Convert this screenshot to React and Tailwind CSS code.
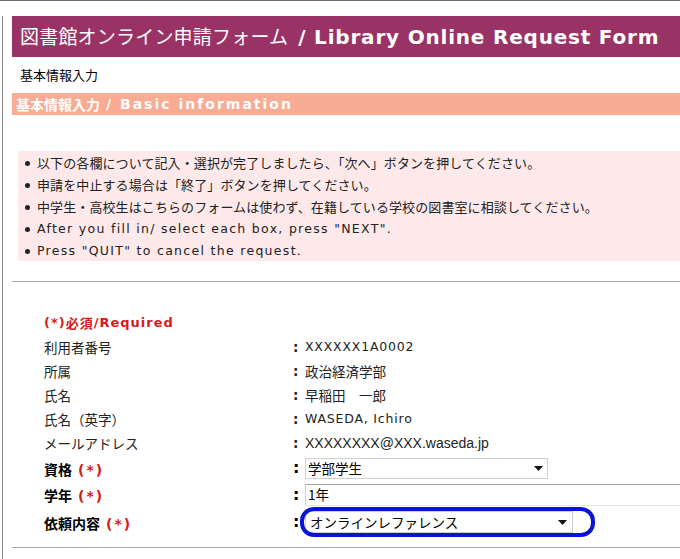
import React from 'react';

const jp = { fontFamily: '"MS PGothic", "Noto Sans CJK JP", "DejaVu Sans", sans-serif' };
const vd = { fontFamily: '"DejaVu Sans", "Noto Sans CJK JP", sans-serif' };

const notes = [
  '以下の各欄について記入・選択が完了しましたら、「次へ」ボタンを押してください。',
  '申請を中止する場合は「終了」ボタンを押してください。',
  '中学生・高校生はこちらのフォームは使わず、在籍している学校の図書室に相談してください。',
  'After you fill in/ select each box, press "NEXT".',
  'Press "QUIT" to cancel the request.',
];

const info = [
  ['利用者番号', 'XXXXXX1A0002', true],
  ['所属', '政治経済学部'],
  ['氏名', '早稲田　一郎'],
  ['氏名（英字）', 'WASEDA, Ichiro', true],
  ['メールアドレス', 'XXXXXXXX@XXX.waseda.jp', 'arial'],
];

function Arrow() {
  return (
    <svg width="9" height="5" viewBox="0 0 9 5" className="shrink-0">
      <path d="M0 0 H9 L4.5 5 Z" fill="#111" />
    </svg>
  );
}

function Required({ label }) {
  return (
    <span className="font-bold text-[14px] text-black" style={jp}>
      {label}
      <span className="text-[#d61a1a] ml-[6px] tracking-[2px]" style={vd}>(*)</span>
    </span>
  );
}

export default function App() {
  return (
    <div className="w-[680px] h-[559px] overflow-hidden bg-white border-t border-[#6f6f6f]" style={jp}>
      <div className="ml-[2px] h-full border-l border-[#8a8a8a] pl-[9px]">
        <div className="mt-[15px] h-[41px] bg-[#993366] flex items-center pl-[8px] text-white whitespace-nowrap">
          <span className="text-[19px] tracking-[0.2px]">図書館オンライン申請フォーム</span>
          <span className="font-bold text-[20px] ml-[10px] tracking-[0.8px]" style={vd}>/ Library Online Request Form</span>
        </div>

        <div className="h-[36px] flex items-center pl-[8px] text-[13px] text-black">基本情報入力</div>

        <div className="h-[22px] bg-[#f9ab94] flex items-center pl-[4px] text-white text-[14px] font-bold whitespace-nowrap">
          <span>基本情報入力</span>
          <span className="ml-[6px] tracking-[2px]" style={vd}>/ Basic information</span>
        </div>

        <div className="ml-[6px] mt-[36px] h-[110px] bg-[#fde9e9] pt-[1px] pl-[7px]">
          {notes.map((n, i) => (
            <div key={i} className="h-[22px] flex items-center text-[13px] text-[#222] whitespace-nowrap">
              <span className="w-[5px] h-[5px] rounded-full bg-[#222] mr-[7px] shrink-0" />
              <span style={i > 2 ? vd : jp} className={i > 2 ? 'text-[12.5px] tracking-[1.3px]' : 'tracking-[0.1px]'}>{n}</span>
            </div>
          ))}
        </div>

        <div className="mt-[20px] border-t border-[#a9a9a9]" />

        <div className="pl-[32px] pt-[29px]">
          <div className="h-[24px] flex items-center text-[#d61a1a] font-bold text-[13px] tracking-[1px]" style={vd}>
            (*)<span style={jp}>必須</span>/Required
          </div>
          {info.map(([k, v, latin]) => (
            <div key={k} className="h-[24px] flex items-center text-[13.5px] text-[#222]">
              <span className="w-[249px]">{k}</span>
              <span className="w-[12px] font-bold" style={vd}>:</span>
              <span
                style={latin === 'arial' ? { fontFamily: '"Liberation Sans", sans-serif' } : latin ? vd : jp}
                className={latin === true ? 'text-[12.5px] tracking-[0.8px]' : latin === 'arial' ? 'text-[14px]' : ''}
              >
                {v}
              </span>
            </div>
          ))}

          <div className="h-[26px] flex items-center">
            <span className="w-[249px]"><Required label="資格" /></span>
            <span className="w-[12px] font-bold" style={vd}>:</span>
            <div className="w-[243px] h-[21px] border border-[#cfcfcf] bg-white flex items-center justify-between pl-[2px] pr-[4px] text-[13.5px]">
              <span>学部学生</span>
              <Arrow />
            </div>
          </div>

          <div className="h-[27px] flex items-center">
            <span className="w-[249px]"><Required label="学年" /></span>
            <span className="w-[12px] font-bold" style={vd}>:</span>
            <div className="flex-1 h-[22px] border-t border-[#a0a0a0] border-l border-l-[#cfcfcf] border-b border-b-[#e4e4e4] bg-white flex items-center pl-[2px] text-[13.5px]">
              1年
            </div>
          </div>

          <div className="h-[28px] flex items-center">
            <span className="w-[249px]"><Required label="依頼内容" /></span>
            <span className="w-[12px] font-bold" style={vd}>:</span>
            <div className="relative">
              <div className="w-[268px] h-[22px] border border-[#cfcfcf] bg-white flex items-center justify-between pl-[4px] pr-[5px] text-[13.5px]">
                <span>オンラインレファレンス</span>
                <Arrow />
              </div>
              <div className="absolute left-[-5px] top-[-4px] w-[295px] h-[30px] border-[4px] border-[#0a14d8] rounded-[14px] pointer-events-none" />
            </div>
          </div>
        </div>

        <div className="mt-[11px] border-t border-[#a9a9a9]" />
      </div>
    </div>
  );
}
